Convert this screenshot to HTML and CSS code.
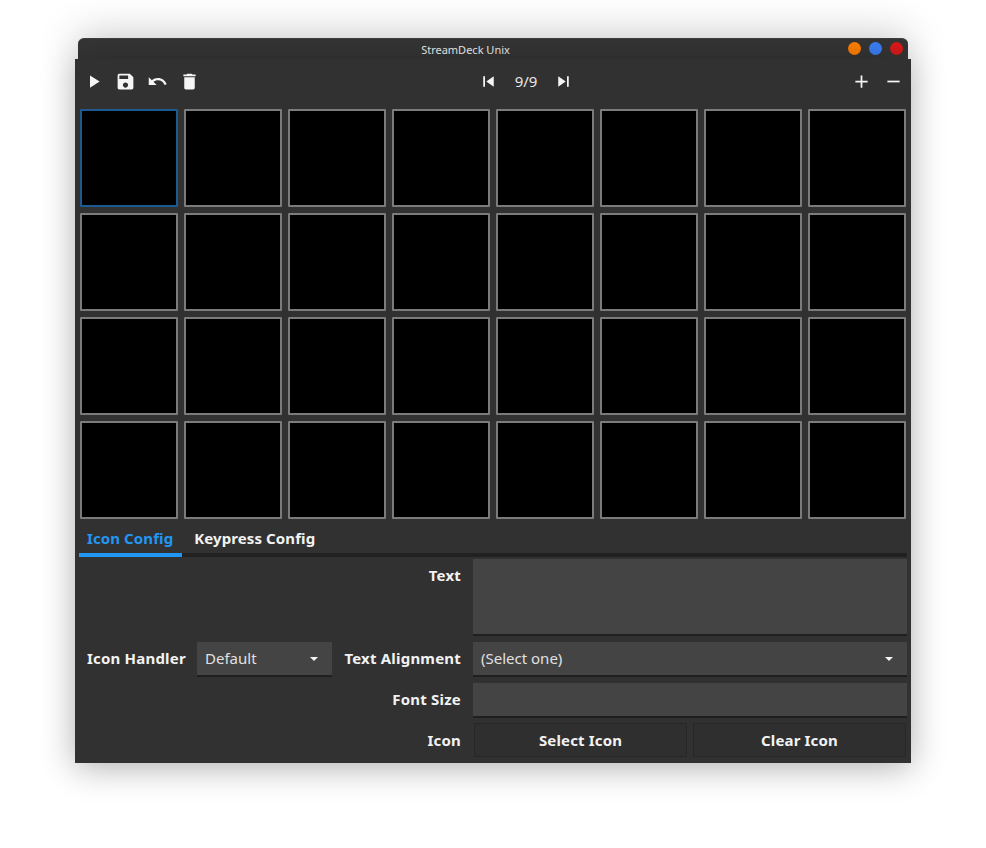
FILE: index.html
```html
<!DOCTYPE html>
<html lang="en">
<head>
    <meta charset="UTF-8">
    <meta name="viewport" content="width=device-width, initial-scale=1.0">
    <title>StreamDeck Unix</title>
    <link rel="stylesheet" href="styles.css">
</head>
<body>
    <div class="window">
        <div class="titlebar">
            <span class="title">StreamDeck Unix</span>
            <div class="dots">
                <span class="dot orange"></span>
                <span class="dot blue"></span>
                <span class="dot red"></span>
            </div>
        </div>
        <div class="main">
            <div class="toolbar">
                <div class="tools">
                    <button class="tool"><svg viewBox="0 0 24 24"><path d="M8 5v14l11-7z"/></svg></button>
                    <button class="tool"><svg viewBox="0 0 24 24"><path d="M17 3H5c-1.11 0-2 .9-2 2v14c0 1.1.89 2 2 2h14c1.1 0 2-.9 2-2V7l-4-4zm-5 16c-1.66 0-3-1.34-3-3s1.34-3 3-3 3 1.34 3 3-1.34 3-3 3zm3-10H5V5h10v4z"/></svg></button>
                    <button class="tool"><svg viewBox="0 0 24 24"><path d="M12.5 8c-2.65 0-5.05.99-6.9 2.6L2 7v9h9l-3.62-3.62c1.39-1.16 3.16-1.88 5.12-1.88 3.54 0 6.55 2.31 7.6 5.5l2.37-.78C21.08 11.03 17.15 8 12.5 8z"/></svg></button>
                    <button class="tool"><svg viewBox="0 0 24 24"><path d="M6 19c0 1.1.9 2 2 2h8c1.1 0 2-.9 2-2V7H6v12zM19 4h-3.5l-1-1h-5l-1 1H5v2h14V4z"/></svg></button>
                </div>
                <div class="pager">
                    <button class="tool"><svg viewBox="0 0 24 24"><path d="M6 6h2v12H6zm3.5 6l8.5 6V6z"/></svg></button>
                    <span class="page">9/9</span>
                    <button class="tool"><svg viewBox="0 0 24 24"><path d="M6 18l8.5-6L6 6v12zM16 6v12h2V6h-2z"/></svg></button>
                </div>
                <div class="tools">
                    <button class="tool"><svg viewBox="0 0 24 24"><path d="M19 13h-6v6h-2v-6H5v-2h6V5h2v6h6v2z"/></svg></button>
                    <button class="tool"><svg viewBox="0 0 24 24"><path d="M19 13H5v-2h14v2z"/></svg></button>
                </div>
            </div>

            <div class="grid" id="grid"></div>

            <div class="tabs">
                <div class="tab active">Icon Config</div>
                <div class="tab">Keypress Config</div>
            </div>

            <div class="form">
                <label class="label">Text</label>
                <div class="field textarea"></div>

                <label class="label handler-label">Icon Handler</label>
                <div class="field select">Default<span class="arrow"></span></div>
                <label class="label align-label">Text Alignment</label>
                <div class="field select">(Select one)<span class="arrow"></span></div>

                <label class="label">Font Size</label>
                <div class="field input"></div>

                <label class="label icon-label">Icon</label>
                <div class="buttons">
                    <button class="btn">Select Icon</button>
                    <button class="btn">Clear Icon</button>
                </div>
            </div>
        </div>
    </div>
    <script>
        const grid = document.getElementById('grid');
        for (let i = 0; i < 32; i++) {
            const cell = document.createElement('div');
            cell.className = i === 0 ? 'cell selected' : 'cell';
            grid.appendChild(cell);
        }
    </script>
</body>
</html>
```
FILE: styles.css
```css
html, body {
    height: 100%;
    margin: 0;
    overflow: hidden;
    background-color: #ffffff;
    font-family: 'Noto Sans', sans-serif;
    color: #f2f2f2;
}
body {
    padding: 38px 75px 0;
    box-sizing: border-box;
}
.window {
    width: 836px;
}
.titlebar {
    height: 21px;
    margin: 0 3px;
    padding-right: 55px;
    display: flex;
    align-items: center;
    justify-content: center;
    position: relative;
    background-color: #353535;
    border-radius: 6px 6px 0 0;
    box-shadow: 0 0 40px rgba(0, 0, 0, 0.3);
    border-top: 1px solid #3f3f3f;
    box-sizing: border-box;
}
.title {
    font-size: 11px;
    color: #eeeeee;
}
.dots {
    position: absolute;
    right: 5px;
    top: 3px;
    display: flex;
    gap: 8px;
}
.dot {
    width: 13px;
    height: 13px;
    border-radius: 50%;
}
.orange { background-color: #ff7f00; }
.blue { background-color: #3b7ff5; }
.red { background-color: #d91a1a; }

.main {
    position: relative;
    height: 704px;
    background-color: #313131;
    box-shadow: 0 4px 32px rgba(0, 0, 0, 0.32);
}
.toolbar {
    height: 50px;
    padding: 0 1.5px 5px 2.5px;
    display: flex;
    align-items: center;
    box-sizing: border-box;
}
.tools {
    display: flex;
}
.pager {
    flex: 1;
    margin-left: 1px;
    display: flex;
    align-items: center;
    justify-content: center;
}
.page {
    width: 23px;
    font-size: 15px;
    line-height: 20px;
    margin: 0 10px 2px;
    text-align: center;
    white-space: nowrap;
    color: #e8e8e8;
}
.tool {
    width: 32px;
    height: 32px;
    padding: 0;
    border: none;
    background: none;
    display: flex;
    align-items: center;
    justify-content: center;
}
.tool svg {
    width: 21px;
    height: 21px;
    fill: #f5f5f5;
}

.grid {
    display: grid;
    grid-template-columns: repeat(8, 98px);
    grid-auto-rows: 98px;
    gap: 6px;
    padding: 0 5px;
}
.cell {
    background-color: #000000;
    border: 2px solid #7b7b7b;
    border-radius: 1px;
    box-sizing: border-box;
}
.cell.selected {
    border-color: #1c5a90;
}

.tabs {
    display: flex;
    margin: 4px 4px 0;
    height: 34px;
    box-sizing: border-box;
    border-bottom: 4px solid #212121;
}
.tab {
    height: 34px;
    padding: 0 8px;
    margin-right: 4px;
    box-sizing: border-box;
    font-size: 15px;
    font-weight: 700;
    line-height: 30px;
    letter-spacing: 0.1px;
    color: #f2f2f2;
}
.tab.active {
    color: #2196f3;
    border-bottom: 4px solid #2196f3;
    padding-right: 9px;
}

.form {
    display: grid;
    grid-template-columns: 118px 135px 141px 434px;
    grid-template-rows: 77px 35px 35px 35px;
    row-gap: 6px;
    margin: 2px 4px 0;
}
.label {
    font-size: 15px;
    font-weight: 700;
    line-height: 33px;
    letter-spacing: 0.2px;
    text-align: right;
    padding-right: 12px;
    grid-column: 1 / 4;
}
.handler-label {
    grid-column: auto;
    text-align: left;
    padding: 0 0 0 8px;
}
.align-label {
    grid-column: auto;
}
.icon-label {
    line-height: 35px;
    margin-top: -1px;
}
.field {
    background-color: #444444;
    border-bottom: 2px solid #1f1f1f;
    box-sizing: border-box;
    font-size: 15px;
    line-height: 33px;
    color: #e0e0e0;
}
.select {
    display: flex;
    align-items: center;
    justify-content: space-between;
    padding: 0 14px 0 8px;
}
.arrow {
    width: 0;
    height: 0;
    border-left: 4.5px solid transparent;
    border-right: 4.5px solid transparent;
    border-top: 4.5px solid #f5f5f5;
}
.buttons {
    display: flex;
    gap: 6px;
    padding: 0 1px;
    margin-top: -1px;
}
.btn {
    flex: 1;
    height: 34px;
    padding: 0;
    font-family: inherit;
    font-size: 15px;
    font-weight: 700;
    letter-spacing: 0.15px;
    color: #f2f2f2;
    background-color: #2f2f2f;
    border: 1px solid #272727;
    border-radius: 1px;
}
```
